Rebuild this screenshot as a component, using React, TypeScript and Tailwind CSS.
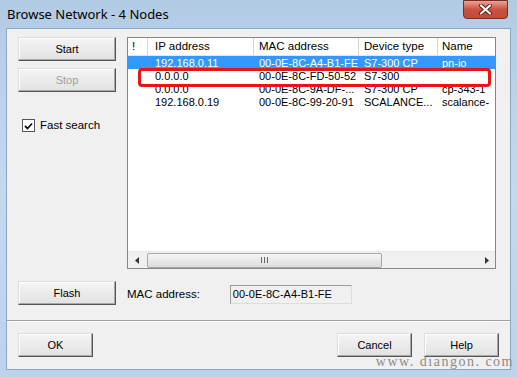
const rows = [
  { ip: '192.168.0.11', mac: '00-0E-8C-A4-B1-FE', type: 'S7-300 CP', name: 'pn-io', sel: true },
  { ip: '0.0.0.0', mac: '00-0E-8C-FD-50-52', type: 'S7-300', name: '', sel: false },
  { ip: '0.0.0.0', mac: '00-0E-8C-9A-DF-...', type: 'S7-300 CP', name: 'cp-343-1', sel: false },
  { ip: '192.168.0.19', mac: '00-0E-8C-99-20-91', type: 'SCALANCE...', name: 'scalance-', sel: false },
];

const btn =
  'h-[24px] flex items-center justify-center bg-gradient-to-b from-[#f4f4f4] to-[#e2e2e2] border border-t-[#dcdcdc] border-l-[#dcdcdc] border-r-[#555] border-b-[#555] shadow-[inset_-1px_-1px_0_#a8a8a8,inset_1px_1px_0_#fff] text-[11px]';

const App = () => {
  return (
    <div
      className="relative w-[517px] h-[377px] overflow-hidden bg-gradient-to-b from-[#b2cbe4] via-[#c4d9ee] to-[#bcd3ea] flex flex-col text-black"
      style={{ fontFamily: '"Liberation Sans", Arial, sans-serif' }}
    >
      {/* Title bar */}
      <div className="h-[28px] shrink-0 flex items-start justify-between pl-[7px] pr-[9px]">
        <span className="mt-[5px] text-[13px]" style={{ fontFamily: '"Noto Sans", sans-serif' }}>
          Browse Network - 4 Nodes
        </span>
        <div className="w-[45px] h-[19px] rounded-b-[4px] border border-[#7a2b22] bg-gradient-to-b from-[#e8a496] via-[#c8523f] to-[#c24a36] flex items-center justify-center">
          <svg width="13" height="11" viewBox="0 0 13 11">
            <path d="M2 1.5 L11 9.5 M11 1.5 L2 9.5" stroke="#5a1d16" strokeWidth="4" strokeLinecap="round" />
            <path d="M2 1.5 L11 9.5 M11 1.5 L2 9.5" stroke="#fff" strokeWidth="2.2" strokeLinecap="round" />
          </svg>
        </div>
      </div>

      {/* Client area */}
      <div className="mx-[6px] mb-[7px] flex-1 border border-[#8aa6c4] bg-[#f0f0f0] flex flex-col">
        <div className="flex pt-[8px] pl-[11px] pr-[14px] h-[276px]">
          {/* Left column */}
          <div className="w-[98px] flex flex-col">
            <div className={btn}>Start</div>
            <div className={btn + ' mt-[7px] text-[#a0a0a0]'}>Stop</div>
            <div className="mt-[25px] ml-[4px] flex items-center gap-[5px]">
              <div className="w-[13px] h-[13px] bg-white border border-[#555] flex items-center justify-center">
                <svg width="9" height="8" viewBox="0 0 9 8">
                  <path d="M1 4 L3.5 6.5 L8 1.5" stroke="#111" strokeWidth="1.8" fill="none" />
                </svg>
              </div>
              <span className="text-[11.5px]">Fast search</span>
            </div>
            <div className={btn + ' mt-auto'}>Flash</div>
          </div>

          {/* Right column */}
          <div className="ml-[11px] flex-1 flex flex-col">
            <div className="relative h-[232px] border border-[#828790] bg-white flex flex-col">
              {/* Header */}
              <div className="h-[18px] flex items-center text-[11.5px] border-b border-[#e5e5e5]">
                <div className="w-[20px] h-full pl-[4px] border-r border-[#d5d5d5] flex items-center">!</div>
                <div className="w-[106px] h-full pl-[7px] border-r border-[#d5d5d5] flex items-center">IP address</div>
                <div className="w-[105px] h-full pl-[5px] border-r border-[#d5d5d5] flex items-center">MAC address</div>
                <div className="w-[79px] h-full pl-[5px] border-r border-[#d5d5d5] flex items-center">Device type</div>
                <div className="flex-1 h-full pl-[4px] flex items-center">Name</div>
              </div>
              {/* Rows */}
              <div className="flex flex-col text-[11px]">
                {rows.map((r, i) => (
                  <div
                    key={i}
                    className={`h-[13px] leading-[14px] flex whitespace-nowrap overflow-hidden ${
                      r.sel ? 'bg-[#3399ff] text-white' : ''
                    }`}
                  >
                    <div className="w-[20px]" />
                    <div className="w-[106px] pl-[7px]">{r.ip}</div>
                    <div className="w-[105px] pl-[5px] overflow-hidden">{r.mac}</div>
                    <div className="w-[79px] pl-[5px] overflow-hidden">{r.type}</div>
                    <div className="flex-1 pl-[4px] overflow-hidden">{r.name}</div>
                  </div>
                ))}
              </div>
              <div className="flex-1" />
              {/* Horizontal scrollbar */}
              <div className="h-[17px] flex items-center bg-[#f0f0f0] border-t border-[#e8e8e8]">
                <div className="w-[17px] flex items-center justify-center">
                  <svg width="4" height="7" viewBox="0 0 4 7">
                    <path d="M4 0 L0 3.5 L4 7 Z" fill="#333" />
                  </svg>
                </div>
                <div className="ml-[2px] w-[235px] h-[15px] rounded-[2px] border border-[#a8a8a8] bg-gradient-to-b from-[#f6f6f6] to-[#dcdcdc] flex items-center justify-center">
                  <svg width="7" height="6" viewBox="0 0 7 6">
                    <path d="M0.5 0 V6 M3.5 0 V6 M6.5 0 V6" stroke="#666" strokeWidth="1" />
                  </svg>
                </div>
                <div className="flex-1" />
                <div className="w-[17px] flex items-center justify-center">
                  <svg width="4" height="7" viewBox="0 0 4 7">
                    <path d="M0 0 L4 3.5 L0 7 Z" fill="#333" />
                  </svg>
                </div>
              </div>
              {/* Red highlight */}
              <div className="absolute left-[10px] top-[30px] w-[353px] h-[19px] border-[3px] border-[#e8141b] rounded-[4px]" />
            </div>

            <div className="mt-auto mb-[1px] flex items-center">
              <span className="text-[11.5px]">MAC address:</span>
              <div className="ml-[30px] w-[122px] h-[19px] border border-[#9a9a9a] border-b-[#dcdcdc] border-r-[#dcdcdc] bg-[#f0f0f0] pl-[2px] text-[11px] leading-[17px]">
                00-0E-8C-A4-B1-FE
              </div>
            </div>
          </div>
        </div>

        {/* Separator */}
        <div className="mt-[15px] h-[2px] border-t border-[#a0a0a0] border-b border-b-white" />

        {/* Bottom buttons */}
        <div className="flex pl-[11px] pr-[11px] pt-[11px]">
          <div className={btn + ' w-[75px] border-[#333] border-t-[#333] border-l-[#333]'}>OK</div>
          <div className="flex-1" />
          <div className={btn + ' w-[75px]'}>Cancel</div>
          <div className={btn + ' w-[75px] ml-[12px]'}>Help</div>
        </div>
      </div>

      {/* Watermark */}
      <div
        className="absolute right-[3px] bottom-[5px] text-[14px] tracking-[1.5px] text-[#8a8a8a]"
        style={{ fontFamily: '"Liberation Serif", serif' }}
      >
        www. diangon. com
      </div>
    </div>
  );
};

export default App;
